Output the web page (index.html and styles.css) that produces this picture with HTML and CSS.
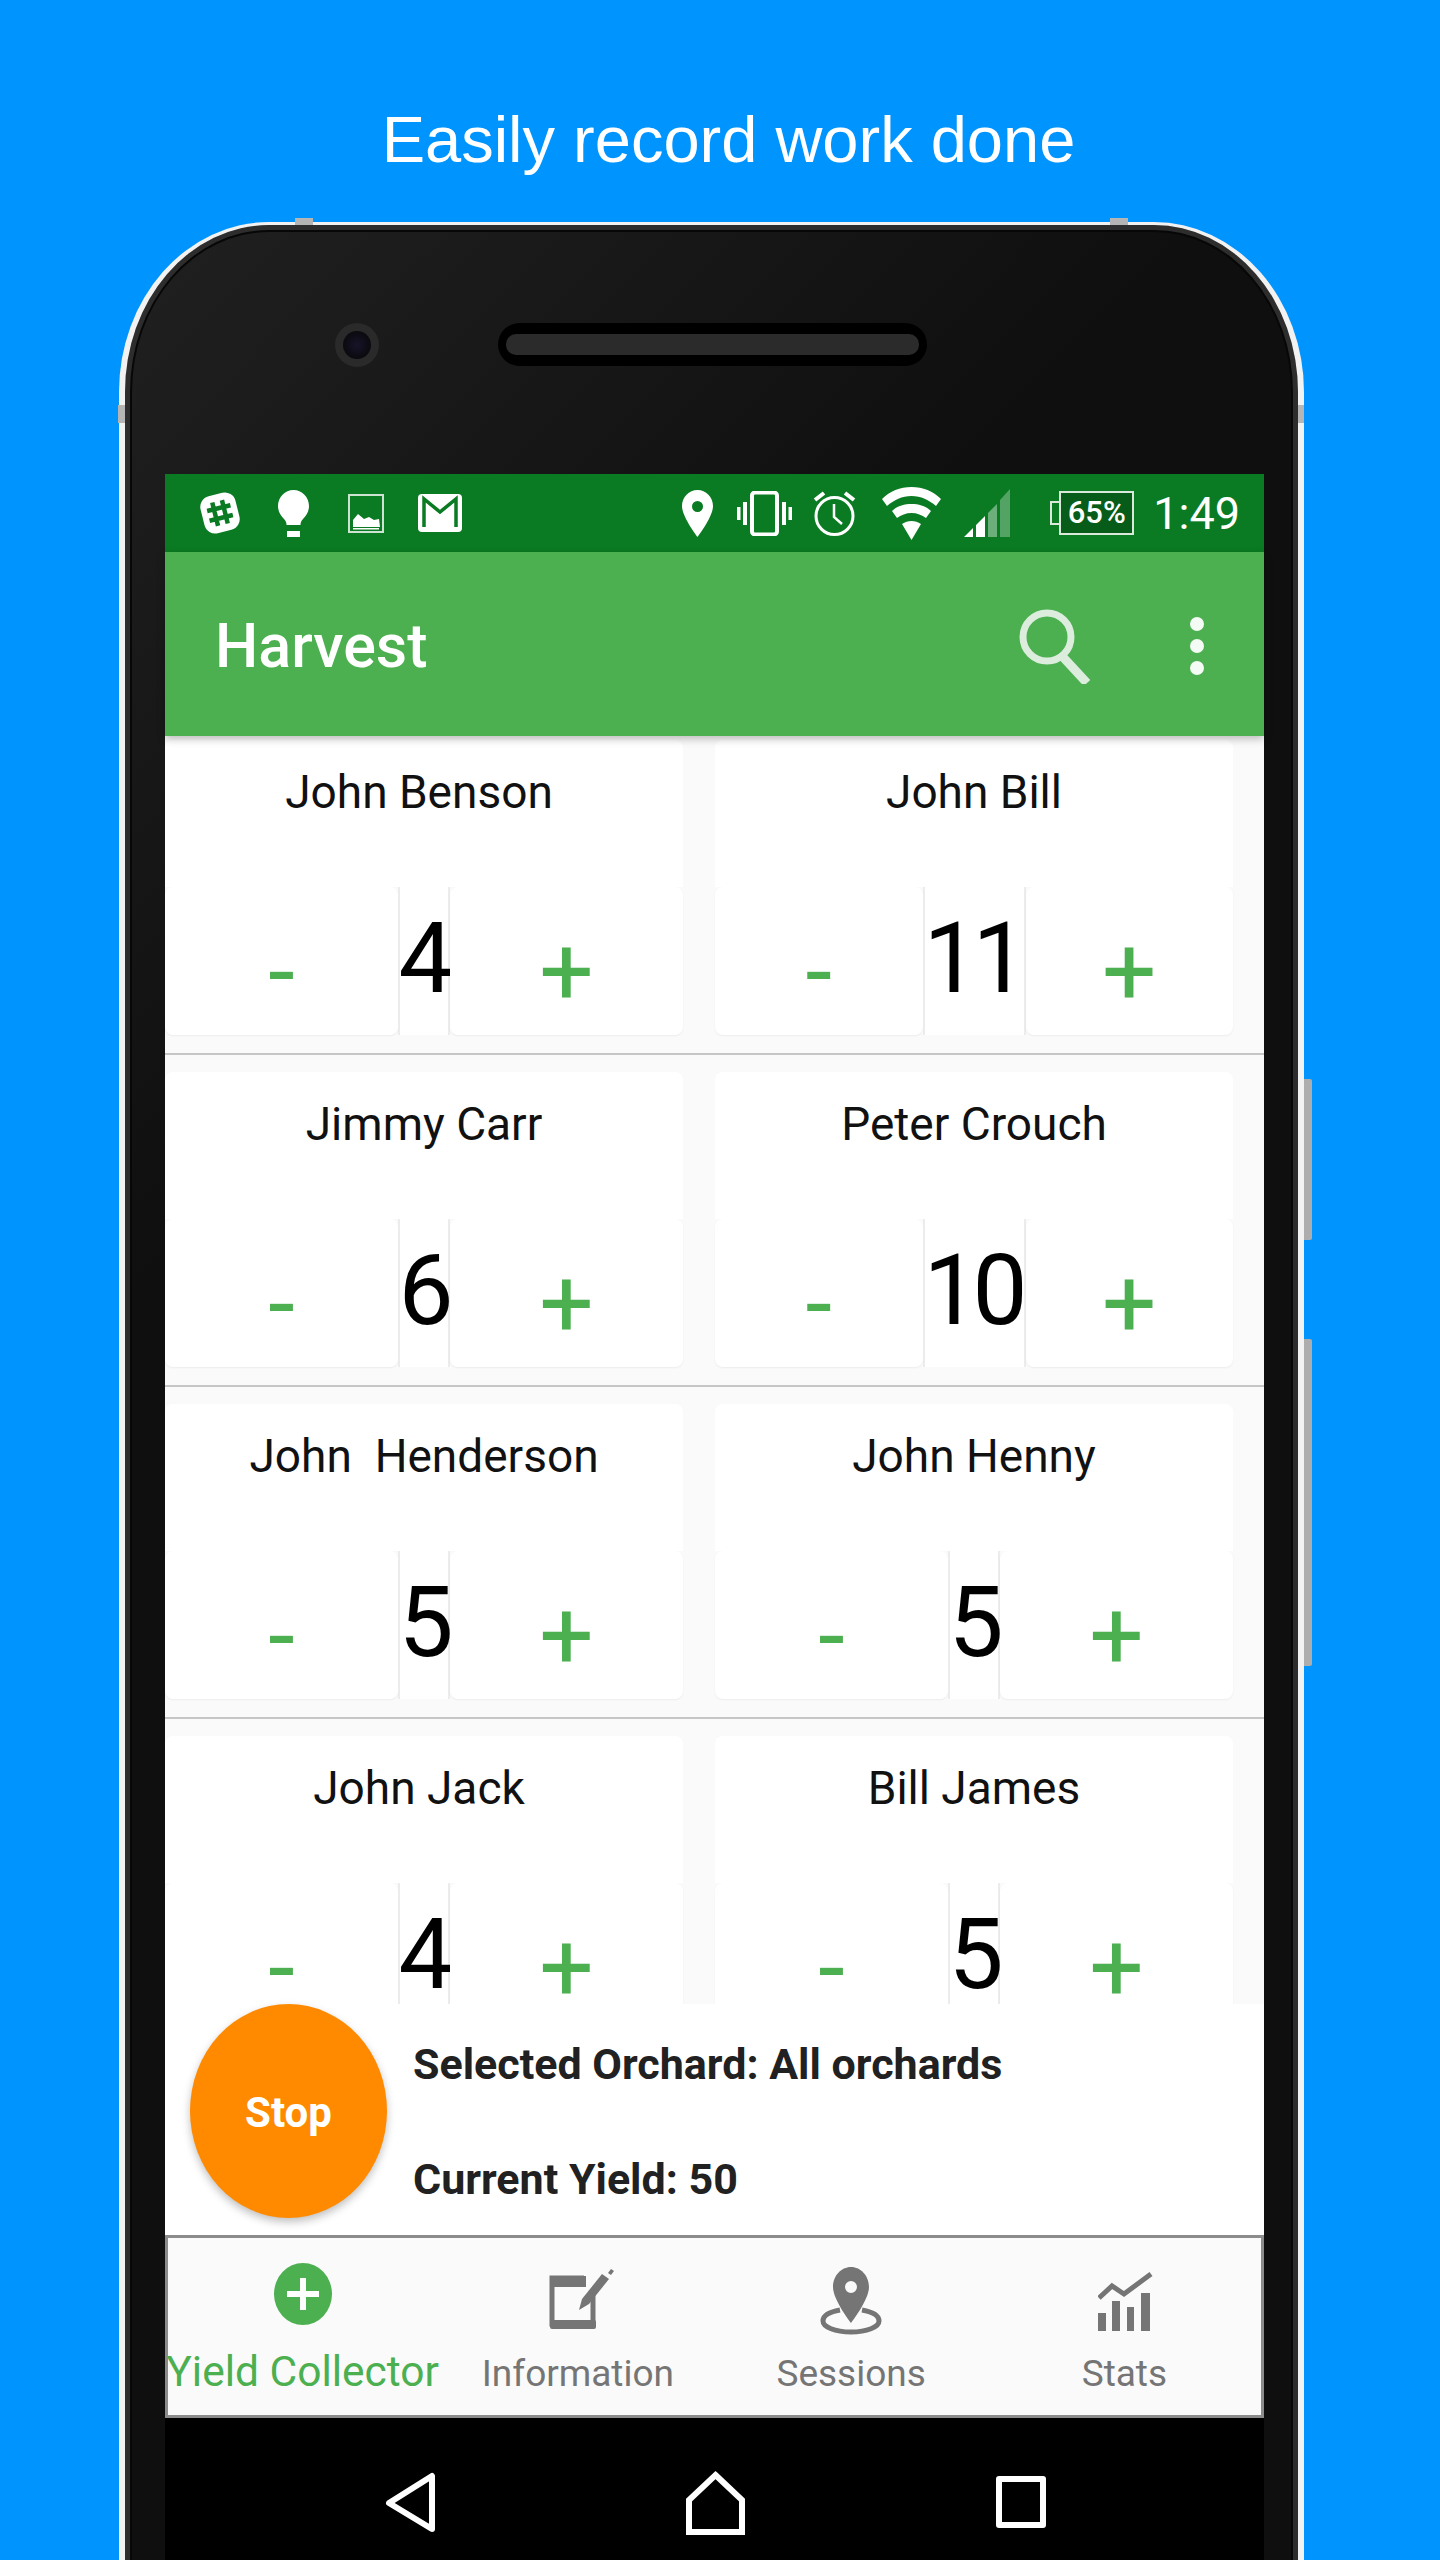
FILE: index.html

```html
<!DOCTYPE html>
<html lang="en">
<head>
  <meta charset="UTF-8" />
  <title>Harvest</title>
  <link rel="stylesheet" href="styles.css">
</head>
<body>

<h1 class="headline">Easily record work done</h1>

<div class="phone">
  <span class="notch notch-top-l"></span>
  <span class="notch notch-top-r"></span>
  <span class="notch notch-side-l"></span>
  <span class="notch notch-side-r"></span>
  <span class="side-btn side-vol"></span>
  <span class="side-btn side-power"></span>

  <div class="bezel">
    <div class="camera"><span></span></div>
    <div class="speaker"><span></span></div>
  </div>

  <div class="screen">
    <div class="statusbar">
      <svg class="ic-slack" width="46" height="50" viewBox="0 0 46 50"><rect x="5" y="6" width="36" height="38" rx="11" fill="#fff" transform="rotate(-14 23 25)"/><g transform="translate(23 25) rotate(-14)" stroke="#0a7b22" stroke-width="4.500" fill="none"><path d="M-5-12V12M5-12V12M-12-5H12M-12 5H12"/></g></svg>
      <svg class="ic-bulb" width="31" height="47" viewBox="0 0 31 47"><path d="M15.500 0C7 0 0 7 0 16c0 6 3 10 6 13 2 2 2.500 4 2.500 6h14c0-2 .5-4 2.500-6 3-3 6-7 6-13C31 7 24 0 15.500 0z" fill="#fff"/><rect x="9" y="41" width="13" height="6" fill="#fff"/></svg>
      <svg class="ic-pic" width="36" height="39" viewBox="0 0 36 39"><rect x="1" y="1" width="34" height="37" fill="none" stroke="#cfe3d2" stroke-width="2"/><path d="M5 33V26l5-6 6 5 5-2 5 3 5-1 1 8z" fill="#fff"/><rect x="5" y="34" width="26" height="1.500" fill="#fff"/></svg>
      <svg class="ic-mail" width="44" height="38" viewBox="0 0 44 38"><rect width="44" height="38" rx="4" fill="#fff"/><path d="M6 36V8l16 13L38 8v28" fill="none" stroke="#0a7b22" stroke-width="3.500" transform="translate(0 -3)"/></svg>

      <svg class="ic-pin" width="31" height="47" viewBox="0 0 31 47"><path fill-rule="evenodd" d="M15.500 0C7 0 0 7 0 16c0 11 15.500 31 15.500 31S31 27 31 16C31 7 24 0 15.500 0zm0 11a5.500 5.500 0 1 1 0 11 5.500 5.500 0 0 1 0-11z" fill="#fff"/></svg>
      <svg class="ic-vib" width="55" height="45" viewBox="0 0 55 45"><rect x="15" y="1.500" width="25" height="42" rx="3" fill="none" stroke="#fff" stroke-width="4"/><path d="M1.500 16v13M8 11v23M47 11v23M53.500 16v13" stroke="#fff" stroke-width="4"/></svg>
      <svg class="ic-alarm" width="43" height="47" viewBox="0 0 43 47"><circle cx="21.500" cy="26" r="18.500" fill="none" stroke="#fff" stroke-width="3"/><path d="M21 14v13l8 7" fill="none" stroke="#fff" stroke-width="2.500"/><path d="M2 10l9-7M41 10l-9-7" stroke="#fff" stroke-width="4"/></svg>
      <svg class="ic-wifi" width="59" height="53" viewBox="0 0 59 53"><path d="M0 12C8 4 18 0 29.500 0S51 4 59 12l-5 7C47 13 39 9 29.500 9S12 13 5 19z" fill="#fff"/><path d="M10 24c5-5 12-7 19.500-7s14.500 2 19.500 7l-5 7c-4-3-9-5-14.500-5S19 28 15 31z" fill="#fff"/><path d="M20 37c3-2 6-3 9.500-3s6.500 1 9.500 3L29.500 53z" fill="#fff"/></svg>
      <svg class="ic-signal" width="46" height="48" viewBox="0 0 46 48"><path d="M0 48L9 39v9zM12 36L21 27v21h-9z" fill="#fff"/><path d="M24 24L33 15v33h-9z" fill="#fff" fill-opacity=".4"/><path d="M36 11L46 0v48H36z" fill="#fff" fill-opacity=".3"/></svg>
      <div class="battery">65%</div>
      <div class="clock">1:49</div>
    </div>

    <div class="appbar">
      <div class="app-title">Harvest</div>
      <svg class="ic-search" width="72" height="75" viewBox="0 0 72 75"><circle cx="28" cy="28" r="24" fill="none" stroke="#dcecdd" stroke-width="7"/><path d="M43 47l25 27" stroke="#dcecdd" stroke-width="9"/></svg>
      <div class="dots"><span></span><span></span><span></span></div>
    </div>

    <div class="list">
      <div class="row">
        <div class="cell">
          <div class="name shift">John Benson</div>
          <div class="controls"><div class="btn">-</div><div class="value">4</div><div class="btn">+</div></div>
        </div>
        <div class="cell">
          <div class="name">John Bill</div>
          <div class="controls"><div class="btn">-</div><div class="value wide">11</div><div class="btn">+</div></div>
        </div>
      </div>
      <div class="row">
        <div class="cell">
          <div class="name">Jimmy Carr</div>
          <div class="controls"><div class="btn">-</div><div class="value">6</div><div class="btn">+</div></div>
        </div>
        <div class="cell">
          <div class="name">Peter Crouch</div>
          <div class="controls"><div class="btn">-</div><div class="value wide">10</div><div class="btn">+</div></div>
        </div>
      </div>
      <div class="row">
        <div class="cell">
          <div class="name">John  Henderson</div>
          <div class="controls"><div class="btn">-</div><div class="value">5</div><div class="btn">+</div></div>
        </div>
        <div class="cell">
          <div class="name">John Henny</div>
          <div class="controls"><div class="btn">-</div><div class="value">5</div><div class="btn">+</div></div>
        </div>
      </div>
      <div class="row">
        <div class="cell">
          <div class="name shift">John Jack</div>
          <div class="controls"><div class="btn">-</div><div class="value">4</div><div class="btn">+</div></div>
        </div>
        <div class="cell">
          <div class="name">Bill James</div>
          <div class="controls"><div class="btn">-</div><div class="value">5</div><div class="btn">+</div></div>
        </div>
      </div>
    </div>

    <div class="footer">
      <div class="stop">Stop</div>
      <div class="summary">
        <div>Selected Orchard: All orchards</div>
        <div>Current Yield: 50</div>
      </div>
    </div>

    <div class="tabs">
      <div class="tab active">
        <svg width="58" height="62" viewBox="0 0 58 62"><ellipse cx="29" cy="31" rx="29" ry="31" fill="#4caf50"/><path d="M29 15v32M13 31h32" stroke="#fff" stroke-width="6"/></svg>
        <div class="tab-label">Yield Collector</div>
      </div>
      <div class="tab">
        <svg class="tab-info" width="65" height="62" viewBox="0 0 65 62"><path d="M44 22v34H3V10h32" fill="none" stroke="#757575" stroke-width="5"/><rect x="1" y="8" width="36" height="11" fill="#757575"/><rect x="1" y="52" width="46" height="9" rx="2" fill="#757575"/><path d="M30 42l3-11 20-25 7 5-20 25z" fill="#757575"/><path d="M59 5l3-4 3 2-3 4z" fill="#757575"/></svg>
        <div class="tab-label">Information</div>
      </div>
      <div class="tab">
        <svg class="tab-pin" width="62" height="68" viewBox="0 0 62 68"><path fill-rule="evenodd" d="M31 0C21 0 13 9 13 20c0 13 18 36 18 36s18-23 18-36C49 9 41 0 31 0zm0 14a6 6 0 1 1 0 12 6 6 0 0 1 0-12z" fill="#757575"/><path d="M20 43C9 45 3 49 3 54c0 6 12 11 28 11s28-5 28-11c0-5-6-9-17-11" fill="none" stroke="#757575" stroke-width="5"/></svg>
        <div class="tab-label">Sessions</div>
      </div>
      <div class="tab">
        <svg class="tab-stats" width="55" height="58" viewBox="0 0 55 58"><path d="M1 25l13-12 12 8L53 1" fill="none" stroke="#757575" stroke-width="5"/><path d="M0 40h8v18H0zM14 28h8v30h-8zM29 34h7v24h-7zM43 20h9v38h-9z" fill="#757575"/></svg>
        <div class="tab-label">Stats</div>
      </div>
    </div>

    <div class="navbar">
      <svg width="50" height="61" viewBox="0 0 50 61"><path d="M47 4v53L4 31z" fill="none" stroke="#fff" stroke-width="6" stroke-linejoin="round"/></svg>
      <svg width="59" height="65" viewBox="0 0 59 65"><path d="M29.500 5L56 30v32H3V30z" fill="none" stroke="#fff" stroke-width="6"/></svg>
      <svg width="50" height="52" viewBox="0 0 50 52"><rect x="3" y="3" width="44" height="46" fill="none" stroke="#fff" stroke-width="6" stroke-linejoin="round"/></svg>
    </div>
  </div>
</div>

</body>
</html>
```

FILE: styles.css

```css
html, body { margin: 0; height: 2560px; overflow: hidden; }
body { background-color: #0094ff; font-family: Roboto, "Noto Sans", sans-serif; }

.headline { margin: 0; height: 222px; box-sizing: border-box; padding: 100px 0 0 17px; font: 400 65px/80px "Liberation Sans", Arial, sans-serif; color: #fff; text-align: center; }

/* phone shell */
.phone { position: relative; box-sizing: border-box; width: 1185px; height: 2420px; margin-left: 119px; border: solid #f2f2f2; border-width: 3px 6px 0; border-radius: 150px 150px 0 0 / 170px 170px 0 0; background: linear-gradient(135deg, #202020 0, #1c1c1c 8%, #0f0f0f 30%); box-shadow: inset 0 0 0 5px #2d2d2d, inset 0 0 0 7px #070707; }
.notch { position: absolute; background: #b5b5b5; }
.notch-top-l { left: 170px; top: -7px; width: 18px; height: 7px; }
.notch-top-r { left: 985px; top: -7px; width: 18px; height: 7px; }
.notch-side-l { left: -7px; top: 180px; width: 7px; height: 18px; }
.notch-side-r { right: -6px; top: 180px; width: 6px; height: 18px; }
.side-btn { position: absolute; right: -14px; width: 8px; background: #adadad; border-radius: 0 2px 2px 0; }
.side-vol { top: 854px; height: 161px; }
.side-power { top: 1114px; height: 327px; }

.bezel { height: 249px; display: flex; align-items: center; padding: 0 0 10px 210px; box-sizing: border-box; }
.camera { width: 44px; height: 44px; border-radius: 50%; background: #2a2a2a; display: flex; align-items: center; justify-content: center; }
.camera span { width: 28px; height: 28px; border-radius: 50%; background: radial-gradient(circle, #17142a 0, #0a0a0e 70%); }
.speaker { margin-left: 119px; width: 429px; height: 43px; border-radius: 22px; background: #000; display: flex; align-items: center; justify-content: center; }
.speaker span { width: 413px; height: 21px; border-radius: 10px; background: #2b2b2b; }

/* screen */
.screen { width: 1099px; margin-left: 40px; display: flex; flex-direction: column; height: 2086px; }

.statusbar { height: 78px; flex: none; display: flex; align-items: center; padding: 0 24px 0 32px; box-sizing: border-box; background-color: #0a7b22; color: #fff; }
.ic-bulb { margin-left: 35px; }
.ic-pic { margin-left: 39px; }
.ic-mail { margin-left: 34px; }
.ic-pin { margin-left: auto; }
.ic-vib { margin-left: 24px; }
.ic-alarm { margin-left: 21px; }
.ic-wifi { margin-left: 26px; }
.ic-signal { margin-left: 23px; }
.battery { position: relative; margin-left: 49px; width: 75px; height: 44px; box-sizing: border-box; border: 2px solid #dbe9dd; background: #065c18; font-size: 31px; font-weight: 500; line-height: 40px; text-align: center; }
.battery::before { content: ""; position: absolute; left: -11px; top: 8px; width: 9px; height: 24px; border: solid #dbe9dd; border-width: 2px 0 2px 2px; box-sizing: border-box; }
.clock { margin-left: 19px; font-size: 45px; }

.appbar { height: 184px; flex: none; display: flex; align-items: center; padding: 4px 0 0 50px; box-sizing: border-box; background-color: #4caf50; position: relative; z-index: 2; box-shadow: 0 3px 8px rgba(0,0,0,.25); }
.app-title { font-size: 61px; font-weight: 500; color: #fff; }
.ic-search { margin-left: auto; }
.dots { margin: 0 60px 0 99px; display: flex; flex-direction: column; gap: 8px; }
.dots span { width: 14px; height: 14px; border-radius: 50%; background: #f4faf4; }

/* worker list */
.list { height: 1268px; flex: none; overflow: hidden; background-color: #fafafa; }
.row { display: grid; grid-template-columns: 518px 518px; gap: 32px; height: 332px; box-sizing: border-box; padding-top: 17px; border-bottom: 2px solid #c6c6c6; }
.row:first-child { height: 319px; padding-top: 4px; }
.cell { display: flex; flex-direction: column; height: 295px; }
.name { height: 147px; background: #fff; text-align: center; font-size: 46px; line-height: 104px; color: #111; white-space: pre; border-radius: 8px 8px 0 0; }
.name.shift { padding-right: 10px; }
.controls { display: flex; height: 148px; }
.btn { flex: 1; background: #fff; border-radius: 8px; color: #4caf50; font-size: 96px; line-height: 170px; text-align: center; box-shadow: 0 1px 2px rgba(0,0,0,.06); }
.value { width: 52px; flex: none; background: #fff; border: solid #ececec; border-width: 0 2px; box-sizing: border-box; color: #000; font-size: 98px; letter-spacing: -7px; text-indent: -3px; line-height: 144px; text-align: center; }
.value.wide { width: 103px; letter-spacing: -6px; }

.footer { height: 231px; flex: none; display: flex; background: #fff; position: relative; }
.stop { width: 197px; height: 214px; margin-left: 25px; border-radius: 50%; background: #ff8a00; box-shadow: 0 4px 8px rgba(0,0,0,.25); color: #fff; font-size: 42px; font-weight: 700; line-height: 218px; text-align: center; }
.summary { margin-left: 26px; padding-top: 35px; font-size: 43px; font-weight: 700; color: #212121; display: flex; flex-direction: column; gap: 65px; line-height: 50px; }

.tabs { height: 183px; flex: none; box-sizing: border-box; border: 3px solid #8c8c8c; background: #fafafa; display: grid; grid-template-columns: repeat(4, minmax(0, 1fr)); }
.tab { display: flex; flex-direction: column; align-items: center; color: #757575; padding-top: 26px; box-sizing: border-box; }
.tab svg { height: 70px; flex: none; margin-bottom: 15px; }
.tab .tab-info { margin-left: 8px; }
.tab .tab-pin { margin: 2px 0 13px; }
.tab .tab-stats { margin: 3px 0 12px 3px; }
.tab-label { font-size: 37px; line-height: 50px; white-space: nowrap; }
.tab.active { color: #4caf50; padding: 21px 4px 0 0; }
.tab.active svg { margin-bottom: 18px; }
.tab.active .tab-label { font-size: 42.500px; }

.navbar { height: 142px; flex: none; background: #000; display: flex; padding: 26px 0 0 220px; box-sizing: border-box; gap: 251px; align-items: center; }
```
